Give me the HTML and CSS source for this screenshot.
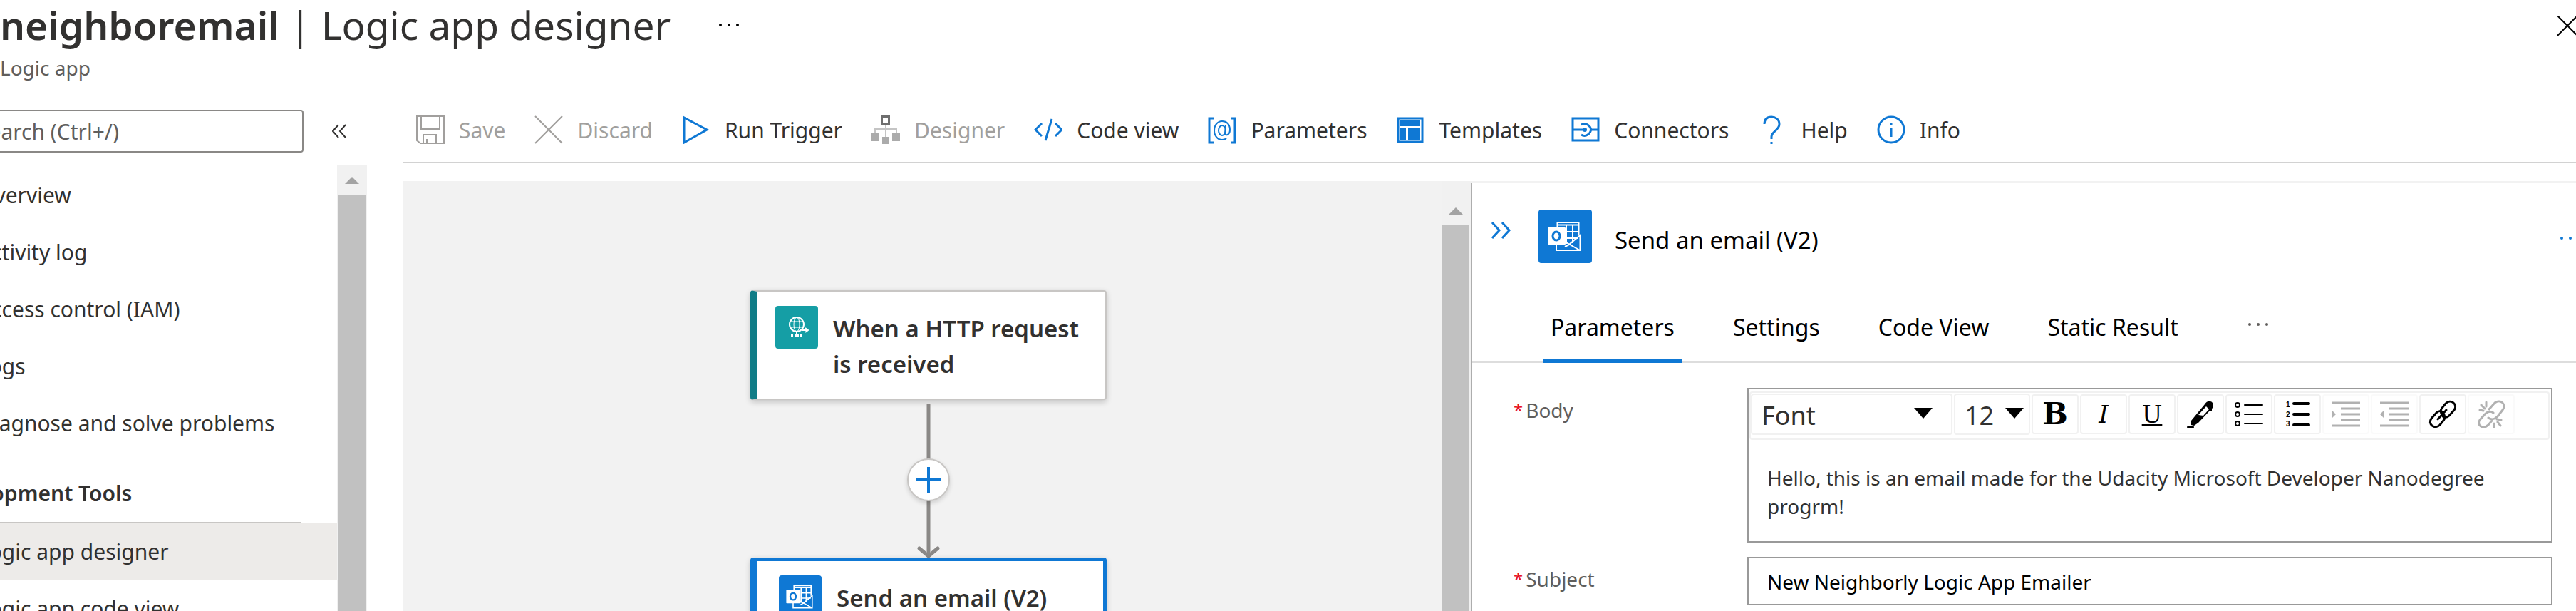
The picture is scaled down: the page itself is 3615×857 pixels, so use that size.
FILE: index.html
```html
<!DOCTYPE html>
<html lang="en">
<head>
<meta charset="utf-8">
<title>neighboremail | Logic app designer</title>
<link rel="stylesheet" href="styles.css">
</head>
<body>
<svg class="defs" aria-hidden="true">
  <symbol id="outlook" viewBox="0 0 75 75">
    <g fill="none" stroke="#fff" stroke-width="2">
      <path d="M26.500 26V18h30v18M27 21.500h29M39 22v26M48 22v25M38 31h18M38 40h18"/>
      <path d="M25 48v9h33.500V36L44 48M37 45l21 12M37 52l8-4"/>
    </g>
    <rect x="13" y="25" width="25" height="24" rx="1" fill="#fff"/>
    <ellipse cx="25" cy="37" rx="5" ry="6" fill="none" stroke="#0f78d4" stroke-width="3"/>
  </symbol>
</svg>

<header class="page-head">
  <div>
    <div class="title-row">
      <h1><strong>neighboremail</strong> | Logic app designer</h1>
      <button class="plain" aria-label="More">
        <svg width="28" height="6" viewBox="0 0 28 6"><circle cx="2" cy="3" r="2"/><circle cx="14" cy="3" r="2"/><circle cx="26" cy="3" r="2"/></svg>
      </button>
    </div>
    <p class="subtitle">Logic app</p>
  </div>
  <button class="plain close" aria-label="Close">
    <svg width="28" height="28" viewBox="0 0 28 28" fill="none" stroke="#000" stroke-width="2"><path d="M0 0l28 28M28 0L0 28"/></svg>
  </button>
</header>

<div class="shell">
  <aside class="sidebar">
    <div class="search-row">
      <input class="search" type="text" placeholder="Search (Ctrl+/)" aria-label="Search">
      <button class="plain" aria-label="Collapse menu">
        <svg width="20" height="20" viewBox="0 0 20 20" fill="none" stroke="#323130" stroke-width="2"><path d="M9 1L1 10l8 9M19 1l-8 9 8 9"/></svg>
      </button>
    </div>
    <div class="nav-row">
      <nav>
        <a href="#">Overview</a>
        <a href="#">Activity log</a>
        <a href="#">Access control (IAM)</a>
        <a href="#">Logs</a>
        <a href="#">Diagnose and solve problems</a>
        <h2>Development Tools</h2>
        <a href="#" class="current">Logic app designer</a>
        <a href="#">Logic app code view</a>
      </nav>
      <div class="scrollbar"><span class="scroll-up"></span><span class="thumb"></span></div>
    </div>
  </aside>

  <main>
    <div class="toolbar">
      <button disabled>
        <svg viewBox="0 0 40 40" fill="none" stroke="#a19f9d" stroke-width="2"><path d="M1 1h38v38H6l-5-4zM7 1v18h26V1M10 39V27h18v12M15 39v-6"/></svg>Save</button>
      <button disabled>
        <svg viewBox="0 0 40 40" fill="none" stroke="#a19f9d" stroke-width="2"><path d="M1 1l38 38M39 1L1 39"/></svg>Discard</button>
      <button>
        <svg viewBox="0 0 40 40" fill="none" stroke="#0f78d4" stroke-width="3"><path d="M3 3v35l32-18z"/></svg>Run Trigger</button>
      <button disabled>
        <svg viewBox="0 0 40 40"><path d="M14.500 1.500h10v10h-10z" fill="#fff" stroke="#6e6e6e" stroke-width="3"/><path d="M20 13v18M5 26v-7h30v7" fill="none" stroke="#c4c4c4" stroke-width="2"/><path d="M0 25h11v11H0zM15 30h10v10H15zM29 25h11v11H29z" fill="#ababab"/></svg>Designer</button>
      <button>
        <svg viewBox="0 0 40 40" fill="none" stroke="#0f78d4" stroke-width="3"><path d="M11 11L2 20l9 9M30 11l9 9-9 9M25 5L16 35"/></svg>Code view</button>
      <button>
        <svg viewBox="0 0 40 40" fill="none" stroke="#0f78d4" stroke-width="3"><path d="M8 4H2v34h6M32 4h6v34h-6"/><g stroke-width="2"><ellipse cx="20" cy="21" rx="5" ry="7"/><path d="M25 14l-1 11c0 4 7 3 7-5 0-8-5-12-11-12S9 13 9 21s5 13 11 13c3 0 5-1 6-2"/></g></svg>Parameters</button>
      <button>
        <svg viewBox="0 0 40 40"><rect x="2" y="4" width="34" height="33" fill="none" stroke="#0f78d4" stroke-width="3"/><path d="M5 7h28v8H5zM5 18h8v16H5zM16 18h17v16H16z" fill="#0f78d4"/></svg>Templates</button>
      <button>
        <svg viewBox="0 0 40 40" fill="none" stroke="#0f78d4" stroke-width="2"><path d="M2 4h36v31H2z" stroke-width="3"/><path d="M2 20h16M28 20h10M14 13c3-2 6-2 9 0 6 4 6 10 0 14-3 2-6 2-9 0" stroke-width="3"/><circle cx="19" cy="20" r="2" fill="#0f78d4"/></svg>Connectors</button>
      <button>
        <svg viewBox="0 0 40 40" fill="none" stroke="#0f78d4" stroke-width="3"><path d="M9 12C9 4 14 2 19 2s11 3 11 10c0 9-11 10-11 18v3M19 37v3"/></svg>Help</button>
      <button>
        <svg viewBox="0 0 40 40" fill="none" stroke="#0f78d4" stroke-width="3"><circle cx="20" cy="20" r="18"/><path d="M20 17v13M20 10v3"/></svg>Info</button>
    </div>

    <div class="work">
      <section class="canvas" aria-label="Workflow">
        <div class="node trigger">
          <span class="node-icon teal"><svg viewBox="0 0 60 60" fill="none" stroke="#fff" stroke-width="2"><circle cx="30" cy="26" r="10"/><ellipse cx="30" cy="26" rx="4" ry="10" stroke-width="1"/><path d="M20 22h20M20 30h20" stroke-width="1"/><path d="M30 36v5M37 34h9M42 31l4 3-4 3"/><path d="M22 42h3M27 42h6M35 42h3" stroke-width="4"/></svg></span>
          <span>When a HTTP request is received</span>
        </div>
        <svg class="edge" viewBox="0 0 60 216" fill="none" stroke="#8a8886" stroke-width="5"><path d="M30 0v214"/><path d="M17 203l13 11 13-11" stroke-linecap="round"/></svg>
        <button class="add" aria-label="Add step"><svg width="36" height="36" viewBox="0 0 36 36" stroke="#0f78d4" stroke-width="4"><path d="M18 0v36M0 18h36"/></svg></button>
        <div class="node action">
          <span class="node-icon blue"><svg><use href="#outlook"/></svg></span>
          <span>Send an email (V2)</span>
        </div>
      </section>
      <div class="scrollbar canvas-scroll"><span class="scroll-up"></span><span class="thumb"></span></div>

      <section class="panel">
        <div class="panel-head">
          <button class="plain" aria-label="Collapse panel"><svg width="29" height="24" viewBox="0 0 29 24" fill="none" stroke="#0f78d4" stroke-width="3"><path d="M2 1l10 11L2 23M16 1l10 11-10 11"/></svg></button>
          <span class="panel-icon blue"><svg><use href="#outlook"/></svg></span>
          <h2>Send an email (V2)</h2>
          <button class="plain panel-more" aria-label="More"><svg width="28" height="6" viewBox="0 0 28 6" fill="#0f78d4"><circle cx="2" cy="3" r="2"/><circle cx="14" cy="3" r="2"/><circle cx="26" cy="3" r="2"/></svg></button>
        </div>
        <div class="tabs" role="tablist">
          <button role="tab" aria-selected="true" class="active">Parameters</button>
          <button role="tab">Settings</button>
          <button role="tab">Code View</button>
          <button role="tab">Static Result</button>
          <button class="tab-more" aria-label="More tabs"><svg width="28" height="6" viewBox="0 0 28 6" fill="#605e5c"><circle cx="2" cy="3" r="2"/><circle cx="14" cy="3" r="2"/><circle cx="26" cy="3" r="2"/></svg></button>
        </div>
        <form class="fields">
          <label for="body"><span class="req">*</span>Body</label>
          <div class="editor">
            <div class="format-bar">
              <span class="pick font-pick"><select aria-label="Font"><option>Font</option></select></span>
              <span class="pick size-pick"><select aria-label="Font size"><option>12</option></select></span>
              <button type="button" class="letter bold" aria-label="Bold">B</button>
              <button type="button" class="letter italic" aria-label="Italic">I</button>
              <button type="button" class="letter underline" aria-label="Underline">U</button>
              <button type="button" aria-label="Text color"><svg viewBox="0 0 40 40"><ellipse cx="6" cy="38" rx="5" ry="2"/><path d="M26 6c3-6 12-6 12 2 0 3-1 3-2 4v4l-3-1-16 17-6 4-4-1v-6z"/><path d="M17 21L28 9l4 4-8 9z" fill="#fff"/></svg></button>
              <button type="button" aria-label="Bulleted list"><svg viewBox="0 0 40 40" fill="none" stroke="#000" stroke-width="2"><circle cx="4" cy="7" r="3"/><circle cx="4" cy="20" r="3"/><circle cx="4" cy="33" r="3"/><path d="M14 7h25M14 20h25M14 33h25" stroke-linecap="round"/></svg></button>
              <button type="button" aria-label="Numbered list"><svg viewBox="0 0 40 40"><path d="M15 5h21M15 20h21M15 35h21" stroke="#000" stroke-width="4" stroke-linecap="round"/><g font-family="Liberation Sans" font-weight="bold" font-size="10"><text x="4" y="10">1</text><text x="4" y="24">2</text><text x="4" y="37">3</text></g></svg></button>
              <button type="button" disabled aria-label="Indent"><svg viewBox="0 0 40 40" stroke="#000" stroke-width="3"><path d="M0 4h40M13 12h27M13 20h27M13 28h27M0 36h40"/><path d="M0 14v12l6-6z" stroke="none"/></svg></button>
              <button type="button" disabled aria-label="Outdent"><svg viewBox="0 0 40 40" stroke="#000" stroke-width="3"><path d="M0 4h40M13 12h27M13 20h27M13 28h27M0 36h40"/><path d="M6 14v12l-6-6z" stroke="none"/></svg></button>
              <button type="button" aria-label="Link"><svg viewBox="0 0 40 40" fill="none" stroke="#000" stroke-width="3" stroke-linecap="round"><path d="M22 21c-6-2-6-7-2-11l4-5c7-7 18 1 12 9l-7 8c-3 3-7 3-9 1"/><path d="M18 19c6 2 6 7 2 11l-4 5C9 42-2 34 4 26l7-8c3-3 7-3 9-1M13 27l12-13"/></svg></button>
              <button type="button" disabled aria-label="Unlink"><svg viewBox="0 0 40 40" fill="none" stroke="#000" stroke-width="3" stroke-linecap="round"><path d="M17 13l8-9c8-6 17 2 11 10l-7 9c-4 4-9 5-13 2M23 18c-4-3-8-2-12 2l-7 8c-5 7 4 14 12 7l5-6M4 14l5 1M6 7l5 5M13 3v6M24 33v5M29 31l4 5M28 27l6 1"/></svg></button>
            </div>
            <textarea id="body" rows="2">Hello, this is an email made for the Udacity Microsoft Developer Nanodegree progrm!</textarea>
          </div>
          <label for="subject"><span class="req">*</span>Subject</label>
          <input id="subject" type="text" value="New Neighborly Logic App Emailer">
        </form>
      </section>
    </div>
  </main>
</div>
</body>
</html>
```
FILE: styles.css
```css
:root {
  --ui: "Noto Sans", "Open Sans", sans-serif;
  --blue: #0f78d4;
  --text: #323130;
  --muted: #605e5c;
  --grey: #f1f1f1;
}

* { box-sizing: border-box; }

body {
  margin: 0;
  height: 100vh;
  display: flex;
  flex-direction: column;
  overflow: hidden;
  font-family: var(--ui);
  font-size: 30px;
  color: var(--text);
  background: #fff;
}

h1, h2, p { margin: 0; }
button, input, select, textarea { font: inherit; color: inherit; margin: 0; }
button { background: none; border: 0; padding: 0; }
svg { display: block; }
.defs { position: absolute; width: 0; height: 0; }
.plain { display: flex; }

.page-head {
  flex: none;
  display: flex;
  justify-content: space-between;
  height: 154px;
}
.title-row { display: flex; align-items: center; gap: 68px; padding-top: 1px; }
h1 { font-size: 55px; line-height: 68px; font-weight: 400; white-space: nowrap; }
h1 strong { font-weight: 600; }
.subtitle { padding-top: 8px; font-size: 28px; line-height: 36px; color: var(--muted); }
.close { margin: 22px -2px 0 0; height: 28px; }

.shell { flex: 1; min-height: 0; display: flex; }

.sidebar { flex: none; width: 565px; display: flex; flex-direction: column; }
.search-row { display: flex; align-items: center; gap: 40px; height: 60px; }
.search {
  width: 496px;
  height: 60px;
  margin-left: -70px;
  padding: 0 36px;
  border: 2px solid #8a8886;
  border-radius: 4px;
}
.search::placeholder { color: var(--muted); opacity: 1; }
.nav-row { flex: 1; min-height: 0; display: flex; padding: 17px 50px 0 0; }
nav { flex: 1; margin-left: -94px; padding-top: 3px; overflow: hidden; }
nav a {
  display: block;
  line-height: 80px;
  padding-left: 63px;
  color: inherit;
  text-decoration: none;
  white-space: nowrap;
}
nav h2 {
  margin: 18px 50px 0 0;
  font-size: 30px;
  line-height: 80px;
  font-weight: 600;
  border-bottom: 2px solid #c8c6c4;
}
nav .current { background: #edebe9; }

.scrollbar {
  flex: none;
  width: 42px;
  padding: 17px 2px 0;
  display: flex;
  flex-direction: column;
  align-items: center;
  gap: 15px;
  background: var(--grey);
}
.scroll-up { border: 10px solid transparent; border-top: 0; border-bottom-color: #a3a3a3; }
.thumb { flex: 1; align-self: stretch; background: #c1c1c1; }

main { flex: 1; min-width: 0; display: flex; flex-direction: column; }
.toolbar {
  flex: none;
  display: flex;
  gap: 41px;
  height: 75px;
  padding: 0 19px 17px;
  border-bottom: 2px solid #d2d2d2;
}
.toolbar button { display: flex; align-items: center; gap: 20px; white-space: nowrap; }
.toolbar button:disabled { color: #a19f9d; }
.toolbar svg { width: 40px; height: 40px; }

.work { flex: 1; min-height: 0; display: flex; margin-top: 25px; background: #f2f2f2; }
.canvas { flex: 1; position: relative; overflow: hidden; }
.canvas-scroll { width: 40px; padding: 37px 2px 0 0; }

.node {
  position: absolute;
  left: 488px;
  width: 500px;
  display: flex;
  gap: 21px;
  font-size: 33px;
  line-height: 50px;
  font-weight: 600;
  background: #fff;
  border-radius: 4px;
  box-shadow: 0 3px 8px rgba(0, 0, 0, .2);
}
.node > span:last-child { padding-top: 7px; }
.trigger {
  top: 153px;
  min-height: 154px;
  padding: 20px 24px 20px 25px;
  border: 2px solid #c8c6c4;
  border-left: 10px solid #107c86;
}
.action {
  top: 528px;
  min-height: 154px;
  padding: 20px 24px 20px 30px;
  border: 5px solid var(--blue);
  border-left-width: 10px;
}
.node-icon { flex: none; width: 60px; height: 60px; border-radius: 4px; }
.node-icon svg, .panel-icon svg { width: 100%; height: 100%; }
.teal { background: #159ea5; }
.blue { background: var(--blue); }
.edge { position: absolute; left: 708px; top: 312px; width: 60px; height: 216px; }
.add {
  position: absolute;
  left: 708px;
  top: 389px;
  width: 60px;
  height: 60px;
  display: grid;
  place-items: center;
  background: #fff;
  border: 2px solid #c8c6c4;
  border-radius: 50%;
  box-shadow: 0 3px 6px rgba(0, 0, 0, .15);
}

.panel {
  flex: none;
  width: 1551px;
  margin-top: 3px;
  border-left: 2px solid #adadad;
  background: #fff;
  color: #000;
}
.panel-head { display: flex; height: 149px; padding: 37px 0 0 26px; }
.panel-head > .plain { height: 24px; margin-top: 17px; }
.panel-icon { width: 75px; height: 75px; margin: 0 32px 0 38px; border-radius: 4px; }
.panel-head h2 { padding-top: 19px; font-size: 33px; line-height: 48px; font-weight: 400; }
.panel-head > .panel-more { margin: 37px -6px 0 auto; }

.tabs { display: flex; gap: 62px; height: 103px; padding-left: 100px; border-bottom: 2px solid #ddd; }
.tabs button { height: 103px; padding: 6px 10px 0; font-size: 32px; border-bottom: 5px solid transparent; }
.tabs .active { border-bottom-color: var(--blue); }
.tabs .tab-more { padding: 0 26px; }

.fields {
  display: grid;
  grid-template-columns: 328px 1fr;
  row-gap: 20px;
  padding: 35px 33px 0 58px;
  font-size: 28px;
}
.fields label { display: flex; gap: 4px; padding-top: 11px; font-size: 28px; line-height: 40px; color: var(--muted); }
.req { color: #e81123; font-size: 24px; }
.editor { border: 2px solid #999; padding: 3px 2px 0 1px; color: var(--text); }
.format-bar {
  display: flex;
  gap: 2px;
  height: 68px;
  padding: 1px 0 0;
  border: 2px solid var(--grey);
  border-radius: 4px;
}
.pick { position: relative; height: 58px; font-size: 36px; }
.pick::after {
  content: "";
  position: absolute;
  right: 28px;
  top: 20px;
  border: 13px solid transparent;
  border-top: 15px solid #000;
  border-bottom: 0;
  pointer-events: none;
}
.font-pick { width: 283px; }
.size-pick { width: 107px; }
.size-pick::after { right: 9px; }
.pick select {
  appearance: none;
  width: 100%;
  height: 58px;
  padding: 2px 13px 0;
  background: #fff;
  border: 2px solid var(--grey);
  border-radius: 4px;
}
.format-bar button {
  width: 66px;
  height: 56px;
  margin-top: 1px;
  display: grid;
  place-items: center;
  border: 2px solid var(--grey);
  border-radius: 4px;
  color: #000;
}
.format-bar button:disabled { opacity: .3; }
.format-bar svg { width: 40px; height: 40px; }
.format-bar .letter { font-family: "DejaVu Serif", serif; font-size: 34px; line-height: 40px; }
.format-bar .bold { font-weight: 700; font-size: 42px; }
.format-bar .italic { font-style: italic; }
.format-bar .underline { text-decoration: underline; }
.editor textarea {
  display: block;
  width: 100%;
  height: 142px;
  padding: 33px 40px 0 25px;
  border: 0;
  background: none;
  resize: none;
  overflow: hidden;
  line-height: 40px;
}
#subject { width: 100%; height: 68px; padding: 2px 26px 0; border: 2px solid #999; background: #fff; }
```
